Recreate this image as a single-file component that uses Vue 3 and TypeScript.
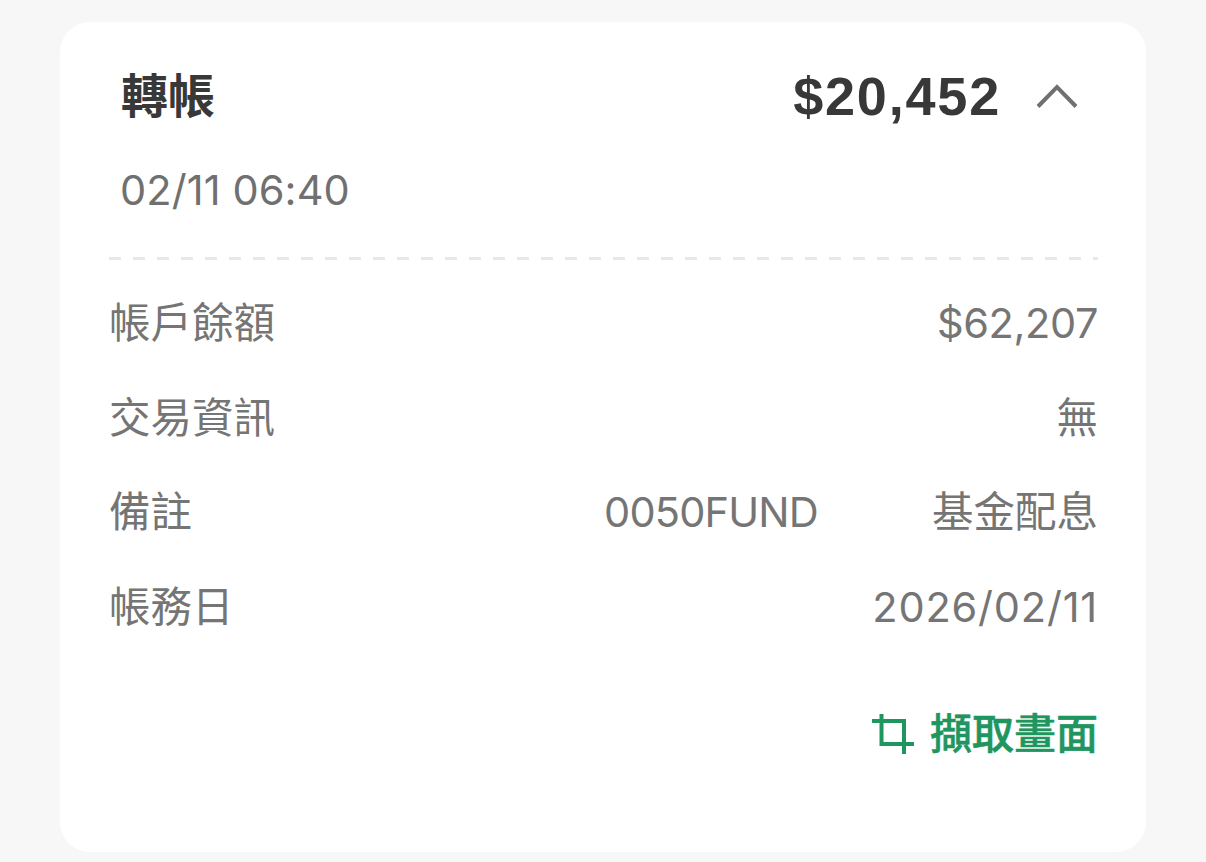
<script setup lang="ts">
// Expanded transaction card: header, date, dashed divider, detail rows, capture action
interface DetailRow {
  label: string
  value: string
  note?: string
}

const rows: DetailRow[] = [
  { label: '帳戶餘額', value: '$62,207' },
  { label: '交易資訊', value: '無' },
  { label: '備註', note: '0050FUND', value: '基金配息' },
  { label: '帳務日', value: '2026/02/11' },
]
</script>

<template>
  <div class="page">
    <section class="card">
      <header class="head">
        <h1 class="title">轉帳</h1>
        <div class="amount-wrap">
          <span class="amount">$20,452</span>
          <svg class="chevron" width="42" height="26" viewBox="0 0 42 26" fill="none">
            <path d="M2 23.5 L21 4 L40 23.5" stroke="#707070" stroke-width="4" />
          </svg>
        </div>
      </header>
      <p class="date">02/11 06:40</p>
      <div class="divider" />
      <ul class="rows">
        <li v-for="row in rows" :key="row.label" class="row">
          <span class="label">{{ row.label }}</span>
          <span v-if="row.note" class="note">{{ row.note }}</span>
          <span class="value">{{ row.value }}</span>
        </li>
      </ul>
      <div class="action">
        <svg class="crop" width="42" height="42" viewBox="0 0 42 42" fill="none">
          <path d="M9.5 1 V31 H42 M0 8 H32 V41" stroke="#1f9560" stroke-width="4" />
        </svg>
        <span class="action-text">擷取畫面</span>
      </div>
    </section>
  </div>
</template>

<style scoped>
.page {
  height: 862px;
  box-sizing: border-box;
  padding: 22px 60px 10px;
  background: #f7f7f7;
  font-family: Inter, "Noto Sans CJK TC", sans-serif;
}

.card {
  height: 100%;
  box-sizing: border-box;
  padding: 44px 48px 0 49px;
  background: #fff;
  border-radius: 30px;
}

.head {
  display: flex;
  justify-content: space-between;
  align-items: center;
  height: 60px;
  padding-left: 12px;
}

.title {
  margin: 0;
  font-size: 47px;
  font-weight: 700;
  line-height: 60px;
  color: #383838;
}

.amount-wrap {
  display: flex;
  align-items: center;
  gap: 35px;
  padding-right: 20px;
}

.amount {
  font-family: "Liberation Sans", sans-serif;
  font-size: 54px;
  font-weight: 700;
  letter-spacing: 1.8px;
  line-height: 60px;
  color: #383838;
}

.date {
  margin: 39px 0 0;
  padding-left: 11px;
  font-size: 41.5px;
  letter-spacing: 0.1px;
  line-height: 50px;
  color: #707070;
}

.divider {
  height: 3px;
  margin-top: 42px;
  background: repeating-linear-gradient(90deg, #e8e8e8 0 12px, transparent 12px 24px);
}

.rows {
  list-style: none;
  margin: 15.5px 0 0;
  padding: 0;
}

.row {
  display: flex;
  align-items: center;
  height: 94.7px;
  font-size: 41.5px;
  line-height: 50px;
  color: #757575;
}

.label {
  flex: 1;
}

.note {
  margin-right: 114px;
  letter-spacing: -0.8px;
}

.row:first-child .value {
  letter-spacing: -0.4px;
}

.row:last-child .value {
  letter-spacing: 0.8px;
}

.action {
  display: flex;
  justify-content: flex-end;
  align-items: center;
  gap: 16px;
  margin-top: 55px;
}

.crop {
  flex: none;
}

.action-text {
  font-size: 42px;
  font-weight: 500;
  -webkit-text-stroke: 0.5px #1f9560;
  line-height: 50px;
  color: #1f9560;
}
</style>
